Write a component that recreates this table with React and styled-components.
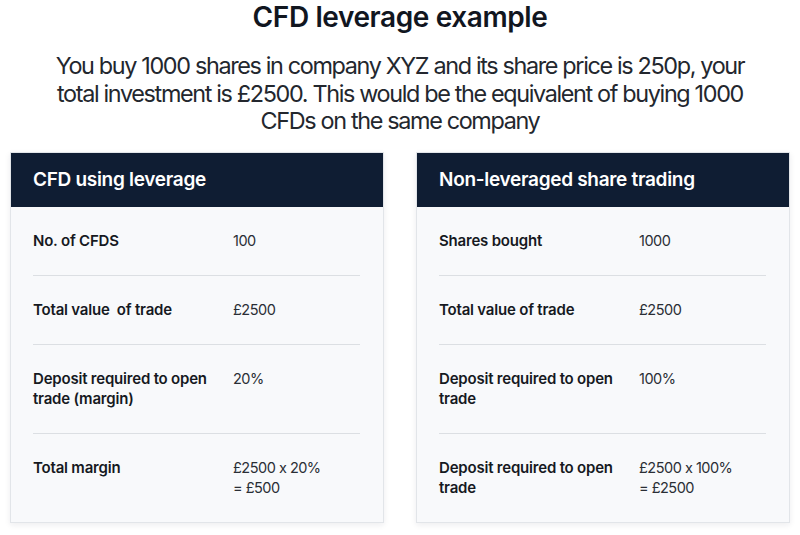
import React from 'react';
import styled, { createGlobalStyle } from 'styled-components';

const GlobalStyle = createGlobalStyle`
  html, body {
    margin: 0;
    padding: 0;
    background: #ffffff;
  }
  body {
    font-family: 'Inter', 'Liberation Sans', sans-serif;
    color: #16191f;
  }
`;

const Page = styled.div`
  width: 800px;
  height: 535px;
  overflow: hidden;
  display: flex;
  flex-direction: column;
`;

const Intro = styled.header`
  display: flex;
  flex-direction: column;
  align-items: center;
  padding-top: 1px;
`;

const Title = styled.h1`
  margin: 0;
  font-size: 28px;
  line-height: 32px;
  font-weight: 600;
  letter-spacing: -0.4px;
  color: #11161f;
`;

const Lead = styled.p`
  margin: 19px 0 0;
  width: 760px;
  text-align: center;
  font-size: 23.4px;
  line-height: 27.5px;
  font-weight: 400;
  letter-spacing: -1.35px;
  color: #23272e;
`;

const Cards = styled.div`
  display: grid;
  grid-template-columns: 374px 374px;
  column-gap: 32px;
  padding: 0 10px;
  margin-top: 17px;
`;

const Card = styled.section`
  background: #f8f9fb;
  border: 1px solid #e2e5e9;
  box-shadow: 0 2px 6px rgba(20, 30, 50, 0.08);
  display: flex;
  flex-direction: column;
`;

const CardHeader = styled.h2`
  margin: 0;
  height: 54px;
  display: flex;
  align-items: center;
  padding: 0 22px;
  background: #0f1d33;
  color: #ffffff;
  font-size: 19px;
  font-weight: 600;
  letter-spacing: -0.3px;
`;

const Rows = styled.div`
  padding: 0 23px 0 22px;
`;

const Row = styled.div`
  display: grid;
  grid-template-columns: 200px 1fr;
  padding: 24px 0;
  border-bottom: ${p => (p.$last ? 'none' : '1px solid #dcdfe3')};
  line-height: 20px;
`;

const Label = styled.div`
  font-size: 15px;
  font-weight: 600;
  letter-spacing: -0.2px;
  color: #16191f;
  padding-right: 8px;
`;

const Value = styled.div`
  font-size: 14.5px;
  font-weight: 400;
  letter-spacing: -0.5px;
  color: #2a2e35;
`;

const tables = [
  {
    title: 'CFD using leverage',
    rows: [
      ['No. of CFDS', '100'],
      ['Total value \u00a0of trade', '£2500'],
      ['Deposit required to open trade (margin)', '20%'],
      ['Total margin', '£2500 x 20%\n= £500'],
    ],
  },
  {
    title: 'Non-leveraged share trading',
    rows: [
      ['Shares bought', '1000'],
      ['Total value of trade', '£2500'],
      ['Deposit required to open trade', '100%'],
      ['Deposit required to open trade', '£2500 x 100%\n= £2500'],
    ],
  },
];

export default function App() {
  return (
    <Page>
      <GlobalStyle />
      <Intro>
        <Title>CFD leverage example</Title>
        <Lead>
          You buy 1000 shares in company XYZ and its share price is 250p, your
          <br />
          total investment is £2500. This would be the equivalent of buying 1000
          <br />
          CFDs on the same company
        </Lead>
      </Intro>
      <Cards>
        {tables.map(t => (
          <Card key={t.title}>
            <CardHeader>{t.title}</CardHeader>
            <Rows>
              {t.rows.map(([label, value], i) => (
                <Row key={i} $last={i === t.rows.length - 1}>
                  <Label>{label}</Label>
                  <Value>
                    {value.split('\n').map((line, j) => (
                      <div key={j}>{line}</div>
                    ))}
                  </Value>
                </Row>
              ))}
            </Rows>
          </Card>
        ))}
      </Cards>
    </Page>
  );
}
